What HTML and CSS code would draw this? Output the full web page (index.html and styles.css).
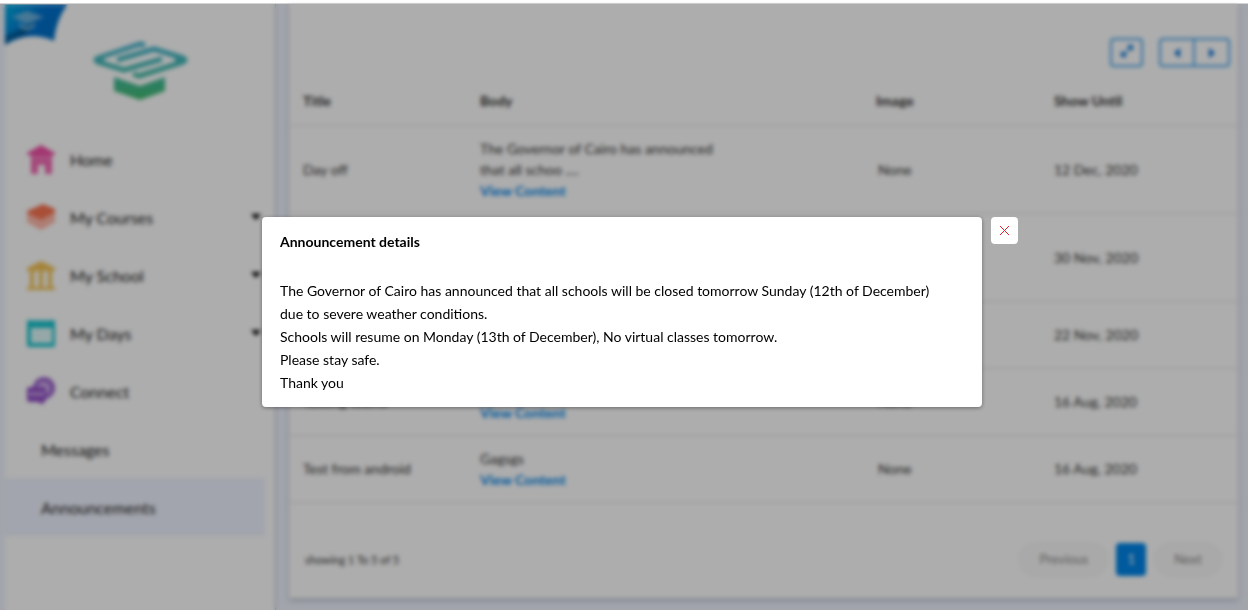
FILE: index.html
```html
<!DOCTYPE html>
<html lang="en">
<head>
  <meta charset="UTF-8" />
  <meta name="viewport" content="width=device-width, initial-scale=1.0"/>
  <title>Announcements</title>
  <link rel="stylesheet" href="styles.css">
</head>
<body>

  <header class="top-strip"></header>

  <div class="page">
    <aside class="sidebar">
      <svg class="ribbon" viewBox="0 0 62 42" width="62" height="42">
        <defs>
          <linearGradient id="ribbonFill" x1="0" y1="0" x2="1" y2="0.5">
            <stop offset="0" stop-color="#00aee4"/>
            <stop offset="0.55" stop-color="#0071d0"/>
            <stop offset="1" stop-color="#0070c4"/>
          </linearGradient>
        </defs>
        <path d="M0 1H62Q51 16 49 37Q24 26 0 41Z" fill="url(#ribbonFill)"/>
        <path d="M0 41V32L30 18L22 31Q10 33 0 41Z" fill="#004f83" opacity="0.65"/>
        <path d="M7 13L22 7L39 13L22 20ZM14 19L22 23L30 19V23L22 27L14 23Z" fill="#8cc3df" opacity="0.75"/>
      </svg>

      <a class="logo" href="#" aria-label="Home page">
        <svg viewBox="0 0 96 60" width="96" height="60">
          <defs>
            <linearGradient id="logoFill" x1="0" y1="0" x2="0" y2="60" gradientUnits="userSpaceOnUse">
              <stop offset="0" stop-color="#46b4d4"/>
              <stop offset="0.5" stop-color="#46bbae"/>
              <stop offset="1" stop-color="#42bb6c"/>
            </linearGradient>
          </defs>
          <g fill="none" stroke="url(#logoFill)" stroke-width="5" stroke-linejoin="round">
            <path d="M53 4L48 3L6 17Q2 19 6 21L32 29L70 18"/>
            <path d="M41 33L47 35L91 21Q95 19 91 17L62 8L25 19"/>
          </g>
          <path d="M5 16L12 15V22L5 22Q0 19 5 16ZM91 16L83 15V23L91 22Q97 19 91 16Z" fill="url(#logoFill)"/>
          <path d="M22 36L48 45L73 36V50L48 59L22 50Z" fill="url(#logoFill)"/>
        </svg>
      </a>

      <nav class="menu">
        <a href="#">
          <svg viewBox="0 0 28 30" width="28" height="30" fill="#f04fa6">
            <path d="M14 1L28 9V11H0V9Z"/>
            <path d="M4 11H25V30H18V21H11V30H4Z" opacity="0.85"/>
            <path d="M7 13h3v3h-3zM13 13h3v3h-3zM19 13h3v3h-3z" fill="#f991c9"/>
          </svg>
          Home
        </a>
        <a href="#">
          <svg viewBox="0 0 28 30" width="28" height="30">
            <path d="M0 11L14 18L28 9V20L14 28L0 20Z" fill="#ffb5a5"/>
            <path d="M0 9L16 2L28 7V10L14 18L0 11Z" fill="#fa7452"/>
            <path d="M0 16L14 23L28 15" fill="none" stroke="#ffd0c5"/>
          </svg>
          My Courses
          <span class="caret"></span>
        </a>
        <a href="#">
          <svg viewBox="0 0 28 30" width="28" height="30" fill="#f3c457">
            <path d="M14 1L28 8V11H0V8Z"/>
            <path d="M3 11H7V27H3ZM12 11H16V27H12ZM21 11H25V27H21ZM0 27H28V30H0Z"/>
          </svg>
          My School
          <span class="caret"></span>
        </a>
        <a href="#">
          <svg viewBox="0 0 28 30" width="28" height="30">
            <rect x="0" y="2" width="28" height="27" rx="2" fill="#17c4ce"/>
            <path d="M4 10H25V25H4Z" fill="#f2ffff"/>
            <path d="M9 10V25M14 10V25M20 10V25M4 15H25M4 20H25" stroke="#b9e9ec"/>
            <path d="M5 3H24" stroke="#9be6ea" stroke-width="2" stroke-dasharray="2 2"/>
          </svg>
          My Days
          <span class="caret"></span>
        </a>
        <a href="#">
          <svg viewBox="0 0 28 30" width="28" height="30">
            <circle cx="17" cy="12" r="9" fill="#d3b5ee" stroke="#9a60cc" stroke-width="4"/>
            <path d="M13 9Q18 4 23 9M22 16Q24 13 23 9" fill="none" stroke="#9a60cc"/>
            <path d="M2 11H17Q19 11 19 13V24Q19 26 17 26H16V29L11 26H2Q0 26 0 24V13Q0 11 2 11Z" fill="#9250c6"/>
            <path d="M3 18H16" stroke="#f4e6ff" stroke-width="3" stroke-dasharray="3 2"/>
          </svg>
          Connect
        </a>
        <a class="sub" href="#">Messages</a>
        <a class="sub active" href="#">Announcements</a>
      </nav>
    </aside>

    <main class="card">
      <div class="toolbar">
        <button class="tool" aria-label="Expand">
          <svg viewBox="0 0 14 14" width="14" height="14" fill="#0078dc">
            <path d="M7 1H13V7L10 5L5 10L7 13H1V7L4 9L9 4Z"/>
          </svg>
        </button>
        <div class="tool-group">
          <button class="tool" aria-label="Scroll left">
            <svg viewBox="0 0 8 10" width="8" height="10"><path d="M7 0V10L1 5Z" fill="#0070d8"/></svg>
          </button>
          <button class="tool" aria-label="Scroll right">
            <svg viewBox="0 0 8 10" width="8" height="10"><path d="M1 0V10L7 5Z" fill="#0070d8"/></svg>
          </button>
        </div>
      </div>

      <table>
        <thead>
          <tr><th class="col-title">Title</th><th>Body</th><th class="col-image">Image</th><th class="col-date">Show Until</th></tr>
        </thead>
        <tbody>
          <tr>
            <td>Day off</td>
            <td><p>The Governor of Cairo has announced that all schoo ....</p><a href="#">View Content</a></td>
            <td class="image">None</td>
            <td>12 Dec, 2020</td>
          </tr>
          <tr class="tall">
            <td></td>
            <td></td>
            <td></td>
            <td>30 Nov, 2020</td>
          </tr>
          <tr>
            <td></td>
            <td></td>
            <td></td>
            <td>22 Nov, 2020</td>
          </tr>
          <tr>
            <td>Testing teams</td>
            <td><br><a href="#">View Content</a></td>
            <td class="image">None</td>
            <td>16 Aug, 2020</td>
          </tr>
          <tr>
            <td>Test from android</td>
            <td><p>Gagsgs</p><a href="#">View Content</a></td>
            <td class="image">None</td>
            <td>16 Aug, 2020</td>
          </tr>
        </tbody>
      </table>

      <div class="table-footer">
        <span>showing 1 To 5 of 5</span>
        <div class="pagination">
          <button class="pill" disabled>Previous</button>
          <button class="current">1</button>
          <button class="pill" disabled>Next</button>
        </div>
      </div>
    </main>
  </div>

  <div class="overlay">
    <div class="modal" role="dialog" aria-labelledby="modalTitle">
      <button class="close" aria-label="Close">
        <svg viewBox="0 0 11 11" width="11" height="11"><path d="M1 1L10 10M10 1L1 10" stroke="#e8202a"/></svg>
      </button>
      <h2 id="modalTitle">Announcement details</h2>
      <p>The Governor of Cairo has announced that all schools will be closed tomorrow Sunday (12th of December) due to severe weather conditions.<br>
      Schools will resume on Monday (13th of December), No virtual classes tomorrow.<br>
      Please stay safe.<br>
      Thank you</p>
    </div>
  </div>

</body>
</html>
```
FILE: styles.css
```css
* {
  margin: 0;
  padding: 0;
  box-sizing: border-box;
}

body {
  display: flex;
  flex-direction: column;
  min-height: 100vh;
  background-color: #eff3fd;
  color: #333;
  font-family: Lato, sans-serif;
  font-size: 14px;
  line-height: 21px;
}

a {
  color: #0085e8;
  text-decoration: none;
}

button {
  font-family: inherit;
  font-size: 13px;
}

.top-strip {
  height: 4px;
  background-color: white;
  border-bottom: 1px solid #d4d4d4;
}

.page {
  flex: 1;
  display: flex;
  gap: 13px;
  padding: 0 10px 0 5px;
}

/* sidebar */
.sidebar {
  position: relative;
  width: 271px;
  flex-shrink: 0;
  background-color: white;
  border-right: 1px solid #a9b4cf;
}

.ribbon {
  position: absolute;
  top: 0;
  left: 0;
}

.logo {
  display: flex;
  justify-content: center;
  padding: 37px 0 29px;
}

.menu {
  padding-right: 10px;
}

.menu a {
  display: flex;
  align-items: center;
  gap: 15px;
  height: 58px;
  padding: 0 4px 0 22px;
  color: #222;
  font-size: 16px;
}

.menu .sub {
  padding-left: 36px;
}

.menu .active {
  background-color: #eff3ff;
}

.caret {
  margin-left: auto;
  border: 5px solid transparent;
  border-top: 6px solid #000;
  border-bottom: 0;
}

/* announcements table */
.card {
  flex: 1;
  align-self: flex-start;
  background-color: white;
  box-shadow: 0 2px 5px rgba(60, 60, 100, 0.3);
}

.toolbar {
  display: flex;
  justify-content: flex-end;
  gap: 16px;
  padding: 34px 8px 9px;
}

.tool {
  width: 33px;
  height: 29px;
  background-color: white;
  border: 2px solid #46a6f0;
  border-radius: 4px;
}

.tool-group {
  display: flex;
}

.tool-group .tool {
  width: 36px;
}

.tool-group .tool:first-child {
  border-radius: 4px 0 0 4px;
}

.tool-group .tool:last-child {
  margin-left: -1px;
  border-left-width: 1px;
  border-radius: 0 4px 4px 0;
}

table {
  width: 100%;
  table-layout: fixed;
  border-collapse: collapse;
}

th,
td {
  height: 67px;
  padding: 12px 14px;
  text-align: left;
  border-bottom: 1px solid #dedede;
}

th {
  height: 49px;
}

.tall td {
  height: 88px;
}

.col-title {
  width: 177px;
}

.col-image {
  width: 178px;
}

.col-date {
  width: 198px;
}

td.image {
  padding-left: 16px;
}

td p {
  max-width: 250px;
}

td a {
  font-weight: bold;
}

.table-footer {
  display: flex;
  justify-content: space-between;
  align-items: center;
  padding: 40px 16px 22px;
  font-size: 11px;
}

.pagination {
  display: flex;
  gap: 8px;
}

.pagination button {
  height: 33px;
  border: 1px solid #f0f0f0;
}

.pagination .pill {
  padding: 0 19px;
  background-color: #fafafa;
  border-radius: 17px;
  color: #888;
}

.pagination .current {
  width: 30px;
  background-color: #0085e8;
  border: none;
  border-radius: 4px;
  color: white;
}

/* dialog */
.overlay {
  position: fixed;
  top: 4px;
  right: 0;
  bottom: 0;
  left: 0;
  display: flex;
  justify-content: center;
  align-items: center;
  padding: 10px 4px 0 0;
  background-color: rgba(0, 0, 0, 0.32);
  backdrop-filter: blur(2px);
}

.modal {
  position: relative;
  width: 720px;
  padding: 13px 18px;
  background-color: white;
  border-radius: 4px;
  box-shadow: 0 1px 4px rgba(0, 0, 0, 0.4);
  color: #000;
  line-height: 23px;
}

.modal h2 {
  margin-bottom: 26px;
  font-size: 14px;
}

.modal p {
  max-width: 664px;
}

.close {
  position: absolute;
  top: 0;
  right: -36px;
  display: flex;
  justify-content: center;
  align-items: center;
  width: 27px;
  height: 27px;
  background-color: white;
  border: none;
  border-radius: 4px;
  cursor: pointer;
}
```
